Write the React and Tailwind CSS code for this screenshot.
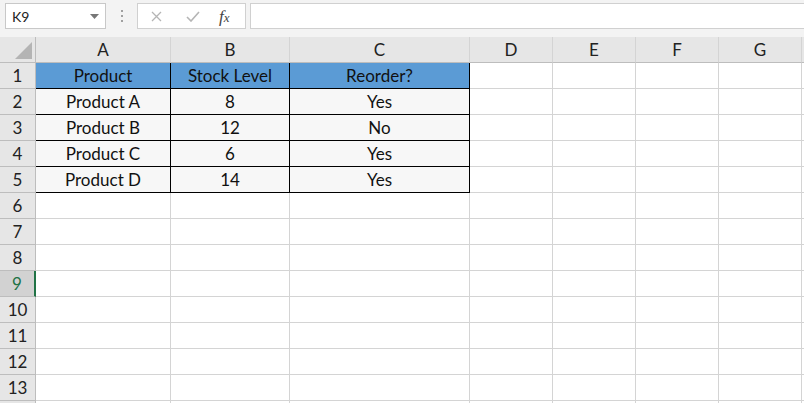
import React from 'react';

const cols = ['A', 'B', 'C', 'D', 'E', 'F', 'G', ''];
const widths = 'grid-cols-[36px_135px_119px_180px_83px_83px_83px_83px_83px]';

const data = [
  ['Product', 'Stock Level', 'Reorder?'],
  ['Product A', '8', 'Yes'],
  ['Product B', '12', 'No'],
  ['Product C', '6', 'Yes'],
  ['Product D', '14', 'Yes'],
];

function Toolbar() {
  return (
    <div className="h-[37px] bg-[#f3f3f3] flex items-start pt-[3px] pl-[5px]">
      <div className="w-[101px] h-[26px] bg-white border border-[#c8c8c8] flex items-center justify-between pl-[6px] pr-[6px] text-[14px] text-[#222]">
        <span>K9</span>
        <svg width="9" height="5" viewBox="0 0 9 5"><path d="M0 0h9L4.5 5z" fill="#777" /></svg>
      </div>
      <div className="w-[31px] h-[26px] flex flex-col items-center justify-center gap-[3px]">
        <span className="w-[2px] h-[2px] bg-[#a0a0a0]" />
        <span className="w-[2px] h-[2px] bg-[#a0a0a0]" />
        <span className="w-[2px] h-[2px] bg-[#a0a0a0]" />
      </div>
      <div className="w-[109px] h-[26px] bg-white border border-[#d0d0d0] flex items-center">
        <svg className="ml-[13px]" width="11" height="11" viewBox="0 0 11 11"><path d="M1 1l9 9M10 1l-9 9" stroke="#b5b5b5" strokeWidth="1.3" /></svg>
        <svg className="ml-[24px]" width="14" height="11" viewBox="0 0 14 11"><path d="M1 6l4 4 8-9" stroke="#b5b5b5" strokeWidth="1.6" fill="none" /></svg>
        <span className="ml-[19px] text-[17px] italic text-[#444] font-['Liberation_Serif',serif] leading-none">f<span className="text-[13px]">x</span></span>
      </div>
      <div className="ml-[4px] flex-1 h-[26px] bg-white border border-[#d0d0d0] border-r-0" />
    </div>
  );
}

export default function App() {
  const rows = Array.from({ length: 14 }, (_, i) => i + 1);
  return (
    <div className="w-[804px] h-[403px] overflow-hidden bg-white font-['Lato',sans-serif]">
      <Toolbar />
      <div className={`grid ${widths} auto-rows-[26px]`}>
        <div className="bg-[#e6e6e6] border-r border-b border-[#bdbdbd] relative">
          <svg className="absolute right-[3px] bottom-[3px]" width="17" height="17" viewBox="0 0 17 17"><path d="M17 0V17H0z" fill="#b4b4b4" /></svg>
        </div>
        {cols.map((c, i) => (
          <div key={i} className="bg-[#e6e6e6] border-r border-b border-[#bdbdbd] border-r-[#d4d4d4] flex items-center justify-center text-[17px] text-[#222]">
            {c}
          </div>
        ))}
        {rows.map((r) => {
          const sel = r === 9;
          const rowData = data[r - 1];
          return (
            <React.Fragment key={r}>
              <div
                className={
                  sel
                    ? 'bg-[#d2d2d2] border-b border-[#bdbdbd] border-r-2 border-r-[#217346] flex items-center justify-center text-[17px] text-[#217346]'
                    : 'bg-[#e6e6e6] border-r border-b border-[#bdbdbd] flex items-center justify-center text-[17px] text-[#222]'
                }
              >
                {r < 14 ? r : ''}
              </div>
              {cols.map((c, ci) => {
                if (rowData && ci < 3) {
                  const head = r === 1;
                  return (
                    <div
                      key={ci}
                      className={
                        head
                          ? 'bg-[#5b9bd5] border-r border-b border-black flex items-center justify-center text-[17px] text-[#111]'
                          : 'bg-[#f7f7f7] border-r border-b border-black flex items-center justify-center text-[17px] text-[#111]'
                      }
                    >
                      {rowData[ci]}
                    </div>
                  );
                }
                return <div key={ci} className="border-r border-b border-[#d4d4d4]" />;
              })}
            </React.Fragment>
          );
        })}
      </div>
    </div>
  );
}
